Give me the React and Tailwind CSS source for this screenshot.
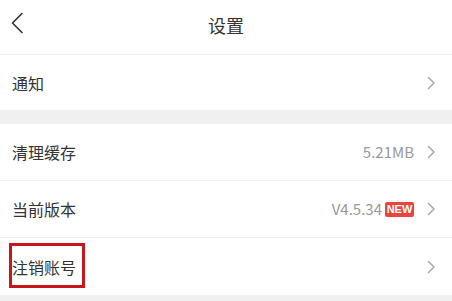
import React from "react";

function Chevron() {
  return (
    <svg width="9" height="14" viewBox="0 0 9 14" className="shrink-0">
      <path d="M1.5 1.5 L7 7 L1.5 12.5" fill="none" stroke="#a8a8a8" strokeWidth="1.5" strokeLinecap="round" strokeLinejoin="round" />
    </svg>
  );
}

function Row({ label, right, border, height, children }) {
  return (
    <div className={`relative flex items-center justify-between bg-white pl-[12px] pr-[16px] ${height} ${border ? "border-b border-[#f0f0f0]" : ""}`}>
      <span className="text-[16px] text-[#333333]">{label}</span>
      <div className="flex items-center">
        {right}
        <span className="ml-[13px] flex items-center">
          <Chevron />
        </span>
      </div>
      {children}
    </div>
  );
}

export default function App() {
  return (
    <div
      className="w-[452px] h-[301px] overflow-hidden bg-[#f0f0f0]"
      style={{ fontFamily: '"Noto Sans CJK SC", "Noto Sans", sans-serif' }}
    >
      <div className="relative flex h-[55px] items-center justify-center border-b border-[#ececec] bg-white">
        <svg width="14" height="22" viewBox="0 0 14 22" className="absolute left-[10px] top-[12px]">
          <path d="M12 1.5 L2.5 11 L12 20.5" fill="none" stroke="#333" strokeWidth="1.6" strokeLinecap="round" strokeLinejoin="round" />
        </svg>
        <span className="-mt-[4px] text-[18px] text-[#333333]">设置</span>
      </div>
      <Row label="通知" height="h-[55px]" />
      <div className="h-[14px]" />
      <Row
        label="清理缓存"
        height="h-[57px]"
        border
        right={<span className="text-[15px] text-[#999999]">5.21MB</span>}
      />
      <Row
        label="当前版本"
        height="h-[57px]"
        border
        right={
          <div className="flex items-center">
            <span className="text-[15px] text-[#999999]">V4.5.34</span>
            <span className="ml-[3px] flex h-[15px] w-[29px] items-center justify-center rounded-[2px] bg-[#e8453c] text-[11px] font-bold leading-none text-white" style={{ fontFamily: '"Liberation Sans", Arial, sans-serif' }}>
              NEW
            </span>
          </div>
        }
      />
      <Row label="注销账号" height="h-[57px]">
        <div className="pointer-events-none absolute left-[9px] top-[5px] h-[45px] w-[76px] border-[3px] border-[#c8161d]" />
      </Row>
    </div>
  );
}
